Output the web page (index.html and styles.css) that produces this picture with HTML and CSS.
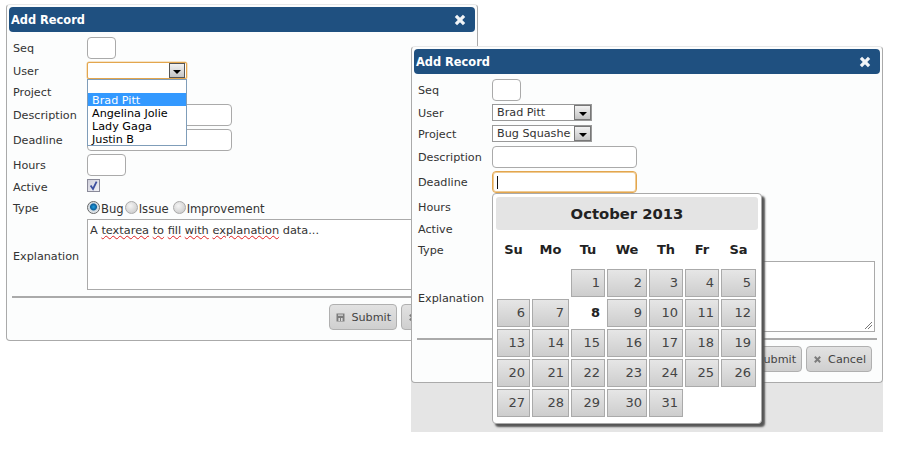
FILE: index.html
```html
<!DOCTYPE html>
<html lang="en">
<head>
<meta charset="utf-8">
<title>Add Record</title>
<link rel="stylesheet" href="styles.css">
</head>
<body>
<section class="window win-a">
  <header class="titlebar"><span>Add Record</span><svg class="close" viewBox="0 0 10 10"><path d="M1.600 1.600 8.400 8.400M8.400 1.600 1.600 8.400"/></svg></header>
  <form class="form">
    <div class="row r-seq"><label>Seq</label><input class="field w-seq" type="text"></div>
    <div class="row r-21"><label>User</label><div class="select focus"><span class="value"></span><span class="arrow"><i></i></span></div></div>
    <div class="row r-21"><label>Project</label></div>
    <div class="row r-25"><label>Description</label><input class="field w-long" type="text"></div>
    <div class="row r-25"><label>Deadline</label><input class="field w-long" type="text"></div>
    <div class="row r-24"><label>Hours</label><input class="field w-hours" type="text"></div>
    <div class="row r-21"><label>Active</label><span class="check"><svg viewBox="0 0 11 11"><path d="M2.600 5.600 5 9 8.600 1.600"/></svg></span></div>
    <div class="row r-21"><label>Type</label><div class="radios"><span class="radio on"></span><span class="rl short">Bug</span><span class="radio"></span><span class="rl">Issue</span><span class="radio"></span><span class="rl">Improvement</span></div></div>
    <div class="row r-ta"><label>Explanation</label><div class="textarea">A <u>textarea</u> <u>to</u> <u>fill</u> <u>with</u> <u>explanation</u> data...</div></div>
    <div class="rule"></div>
    <div class="actions">
      <button class="btn" type="button"><svg viewBox="0 0 9 9"><path d="M.5.5h8v8h-8z"/><path class="cut" d="M2 1.500h5v1.200H2zM2.400 5h1.600v3H2.400zM5 5h1.600v3H5z"/></svg>Submit</button>
      <button class="btn" type="button"><svg viewBox="0 0 10 10"><path class="x" d="M2 2 8 8M8 2 2 8"/></svg>Cancel</button>
    </div>
  </form>
  <ul class="list">
    <li>&nbsp;</li>
    <li class="sel">Brad Pitt</li>
    <li>Angelina Jolie</li>
    <li>Lady Gaga</li>
    <li>Justin B</li>
  </ul>
</section>

<div class="backdrop"></div>

<section class="window win-b">
  <header class="titlebar"><span>Add Record</span><svg class="close" viewBox="0 0 10 10"><path d="M1.600 1.600 8.400 8.400M8.400 1.600 1.600 8.400"/></svg></header>
  <form class="form">
    <div class="row r-seq"><label>Seq</label><input class="field w-seq" type="text"></div>
    <div class="row r-21"><label>User</label><div class="select"><span class="value">Brad Pitt</span><span class="arrow"><i></i></span></div></div>
    <div class="row r-21"><label>Project</label><div class="select"><span class="value">Bug Squashers</span><span class="arrow"><i></i></span></div></div>
    <div class="row r-25"><label>Description</label><input class="field w-long" type="text"></div>
    <div class="row r-25"><label>Deadline</label><div class="field w-long focus"><span class="caret"></span></div></div>
    <div class="row r-24"><label>Hours</label><input class="field w-hours" type="text"></div>
    <div class="row r-21"><label>Active</label></div>
    <div class="row r-21"><label>Type</label></div>
    <div class="row r-ta"><label>Explanation</label><div class="textarea"><svg class="grip" viewBox="0 0 9 9"><path d="M1 8 8 1M4 8 8 4"/></svg></div></div>
    <div class="rule"></div>
    <div class="actions">
      <button class="btn" type="button"><svg viewBox="0 0 9 9"><path d="M.5.5h8v8h-8z"/><path class="cut" d="M2 1.500h5v1.200H2zM2.400 5h1.600v3H2.400zM5 5h1.600v3H5z"/></svg>Submit</button>
      <button class="btn" type="button"><svg viewBox="0 0 10 10"><path class="x" d="M2 2 8 8M8 2 2 8"/></svg>Cancel</button>
    </div>
  </form>
  <div class="calendar">
    <h2 class="cal-title">October 2013</h2>
    <div class="cal-week"><b>Su</b><b>Mo</b><b>Tu</b><b>We</b><b>Th</b><b>Fr</b><b>Sa</b></div>
    <div class="cal-days">
      <span class="blank"></span><span class="blank"></span><a>1</a><a>2</a><a>3</a><a>4</a><a>5</a>
      <a>6</a><a>7</a><a class="today">8</a><a>9</a><a>10</a><a>11</a><a>12</a>
      <a>13</a><a>14</a><a>15</a><a>16</a><a>17</a><a>18</a><a>19</a>
      <a>20</a><a>21</a><a>22</a><a>23</a><a>24</a><a>25</a><a>26</a>
      <a>27</a><a>28</a><a>29</a><a>30</a><a>31</a>
    </div>
  </div>
</section>
</body>
</html>
```
FILE: styles.css
```css
* { box-sizing: border-box; }
html, body { margin: 0; padding: 0; }
body {
  width: 920px;
  height: 450px;
  position: relative;
  overflow: hidden;
  background: #fff;
  font-family: "DejaVu Sans", Verdana, sans-serif;
  font-size: 11.2px;
  color: #222;
}
.window {
  position: absolute;
  width: 472px;
  height: 337px;
  padding: 2px;
  background: #fcfdfd;
  border: 1px solid #aaa;
  border-top-color: #e8e8e8;
  border-radius: 4px;
}
.win-a { left: 6px; top: 4px; }
.win-b { left: 411px; top: 46px; }
.backdrop {
  position: absolute;
  left: 411px;
  top: 340px;
  width: 472px;
  height: 92px;
  background: #e5e5e5;
}
.titlebar {
  display: flex;
  align-items: center;
  justify-content: space-between;
  height: 25px;
  padding: 0 9px 0 2px;
  border-radius: 4px;
  background: #1f5080;
  color: #fff;
  font-size: 11.4px;
  font-weight: 700;
}
.close { width: 12px; height: 12px; }
.close path { fill: none; stroke: #f1f4f7; stroke-width: 2.7; }
.form { padding: 5px 0 0 3px; }
.row {
  display: flex;
  align-items: center;
}
.row label { width: 75px; flex: none; padding-left: 1px; color: #333; }
.r-seq { height: 22px; margin-bottom: 2px; }
.r-21 { height: 21px; }
.r-24 { height: 24px; }
.r-25 { height: 25px; }
.r-ta { height: 74px; }
.field {
  display: block;
  height: 22px;
  align-self: flex-start;
  padding: 0 4px;
  background: #fff;
  border: 1px solid #aaa;
  border-radius: 4px;
  outline: none;
  font: inherit;
}
.row .field { margin-top: 1px; }
.r-seq .field { margin-top: 0; }
.w-seq { width: 29px; }
.w-long { width: 145px; }
.w-hours { width: 39px; }
.field.focus {
  display: flex;
  align-items: center;
  border-color: #e3a64e;
  box-shadow: inset 0 0 0 1px #efcb94;
}
.caret { width: 1px; height: 13px; background: #111; }
.select {
  display: flex;
  align-items: center;
  justify-content: space-between;
  align-self: flex-start;
  width: 100px;
  height: 17px;
  margin-top: 1px;
  background: #fff;
  border: 1px solid #999;
}
.select.focus {
  padding-right: 1px;
  border-color: #e3a64e;
  border-radius: 2px;
  box-shadow: 0 0 0 .5px #efcb94;
}
.value {
  flex: 1;
  min-width: 0;
  padding-left: 4px;
  overflow: hidden;
  white-space: nowrap;
  line-height: 15px;
  color: #333;
}
.arrow {
  display: flex;
  align-items: center;
  justify-content: center;
  flex: none;
  width: 17px;
  height: 15px;
  margin-left: 3px;
  border: 1px solid #777;
  background: linear-gradient(#f2f2f2, #c4c4c4);
}
.focus .arrow { width: 16px; border-color: #555; }
.arrow i {
  width: 0;
  height: 0;
  margin-top: 3px;
  border: 4px solid transparent;
  border-bottom: 0;
  border-top-color: #000;
}
.check {
  display: flex;
  align-self: flex-start;
  width: 13px;
  height: 13px;
  margin-top: 2px;
  border: 1px solid #8a8a99;
  background: linear-gradient(135deg, #cfcfdb, #f2f2f6);
}
.check svg { width: 11px; height: 11px; }
.check path { fill: none; stroke: #3d4f9f; stroke-width: 1.8; }
.radios { display: flex; align-items: center; margin-top: 1px; }
.radio {
  width: 13px;
  height: 13px;
  flex: none;
  margin-top: -3px;
  border: 1px solid #aaa;
  border-radius: 50%;
  background: radial-gradient(circle at 40% 35%, #f4f4f4, #c4c4c4);
}
.radio.on {
  border-color: #666;
  background: radial-gradient(circle at 50% 45%, #22a0e0 0, #0a5f9c 3px, #cfd8df 4px, #fff);
}
.rl { margin-right: 4px; padding-left: 1px; font-size: 11.6px; color: #333; }
.rl.short { margin-right: 1px; }
.textarea {
  position: relative;
  width: 383px;
  height: 71px;
  align-self: flex-start;
  padding: 3px 2px;
  border: 1px solid #aaa;
  background: #fff;
  color: #333;
  font-size: 11.35px;
  line-height: 14px;
}
.textarea u {
  text-decoration: underline wavy #e02020;
  text-decoration-thickness: 1px;
  text-underline-offset: 1px;
}
.grip { position: absolute; right: 1px; bottom: 1px; width: 9px; height: 9px; }
.grip path { fill: none; stroke: #555; stroke-width: .8; }
.rule {
  height: 2px;
  width: 460px;
  margin-top: 3px;
  background: #aaa;
}
.actions {
  display: flex;
  justify-content: flex-end;
  gap: 4px;
  width: 455px;
  margin-top: 6px;
}
.btn {
  display: flex;
  align-items: center;
  gap: 6px;
  height: 26px;
  padding: 0 5px 0 6px;
  border: 1px solid #b0b0b0;
  border-radius: 4px;
  background: linear-gradient(#e2e2e2, #cfcfcf);
  color: #444;
  font: inherit;
}
.btn svg { width: 9px; height: 9px; flex: none; }
.btn path { fill: #7c7c7c; }
.btn path.cut { fill: #dadada; }
.btn path.x { fill: none; stroke: #7c7c7c; stroke-width: 2.2; }
.list {
  position: absolute;
  left: 80px;
  top: 74px;
  width: 100px;
  height: 67px;
  margin: 0;
  padding: 0;
  list-style: none;
  background: #fff;
  border: 1px solid #7f9db9;
  color: #000;
}
.list li { height: 13px; padding-left: 4px; line-height: 15px; }
.list .sel { background: #3399ff; color: #fff; }
.calendar {
  position: absolute;
  left: 80px;
  top: 146px;
  width: 270px;
  height: 231px;
  padding: 3px;
  background: #fff;
  border: 1px solid #aaa;
  border-radius: 4px;
  box-shadow: 3px 3px 2px #555;
  color: #222;
}
.cal-title {
  height: 33px;
  margin: 0;
  border-radius: 3px;
  background: #e4e4e4;
  font-size: 14.8px;
  font-weight: 700;
  line-height: 34px;
  text-align: center;
}
.cal-week, .cal-days {
  display: grid;
  grid-template-columns: 33px 37px 34px 40px 34px 34px 35px;
  column-gap: 2px;
  margin-left: 1px;
}
.cal-week { height: 39px; align-items: center; font-size: 13px; text-align: center; }
.cal-days { grid-auto-rows: 28px; row-gap: 2px; font-size: 13px; }
.cal-days a {
  padding: 5px 4px 0 0;
  border: 1px solid #aaa;
  background: linear-gradient(#e6e6e6, #cdcdcd);
  color: #444;
  text-align: right;
}
.cal-days a.today { border-color: transparent; background: #fff; color: #222; font-weight: 700; }
```
